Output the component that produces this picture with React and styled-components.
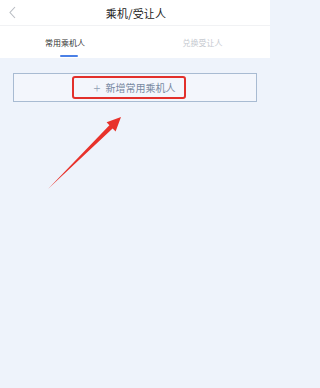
import React, { useState } from 'react';
import styled, { createGlobalStyle } from 'styled-components';

const GlobalStyle = createGlobalStyle`
  html, body {
    margin: 0;
    padding: 0;
    background: #eef3fb;
    font-family: "Noto Sans CJK SC", "Noto Sans", sans-serif;
  }
`;

const Page = styled.div`
  position: relative;
  width: 270px;
  min-height: 388px;
  background: #eef3fb;
`;

const Header = styled.div`
  display: grid;
  grid-template-columns: 30px 1fr 30px;
  align-items: center;
  height: 25px;
  background: #fff;
  border-bottom: 1px solid #f1f2f4;
`;

const BackButton = styled.button`
  display: flex;
  align-items: center;
  justify-content: flex-start;
  padding: 0 0 0 9px;
  border: none;
  background: none;
  height: 100%;
`;

const Title = styled.div`
  text-align: center;
  font-size: 11px;
  color: #222;
  letter-spacing: 0.2px;
  padding-left: 2px;
`;

const TabBar = styled.div`
  display: grid;
  grid-template-columns: 1fr 1fr;
  height: 32px;
  background: #fff;
`;

const Tab = styled.div`
  display: flex;
  flex-direction: column;
  align-items: center;
  padding-top: 11px;
  font-size: 8px;
  color: ${p => (p.active ? '#333' : '#c6cad0')};
  padding-right: ${p => (p.active ? '5px' : '0')};
`;

const Indicator = styled.div`
  width: 18px;
  height: 2px;
  margin-top: 7px;
  margin-left: 7px;
  border-radius: 1px;
  background: ${p => (p.active ? '#4a80e6' : 'transparent')};
`;

const Content = styled.div`
  padding: 15px 13px;
`;

const AddBox = styled.div`
  display: flex;
  align-items: center;
  justify-content: center;
  height: 27px;
  border: 1px solid #a8bbd2;
  background: #f3f6fc;
  padding-right: 12px;
`;

const Highlight = styled.div`
  display: flex;
  align-items: center;
  gap: 5px;
  height: 19px;
  padding: 0 9px 0 20px;
  border: 2px solid #e2302b;
  border-radius: 3px;
  font-size: 10px;
  color: #7889a1;
`;

const Plus = styled.span`
  font-size: 13px;
  font-weight: 300;
  color: #909fb4;
  line-height: 1;
`;

const Annotation = styled.svg`
  position: absolute;
  left: 0;
  top: 0;
  pointer-events: none;
`;

export default function App() {
  const [tab, setTab] = useState(0);
  const tabs = ['常用乘机人', '兑换受让人'];

  return (
    <Page>
      <GlobalStyle />
      <Header>
        <BackButton>
          <svg width="7" height="13" viewBox="0 0 7 13">
            <path d="M6 1 L1 6.5 L6 12" fill="none" stroke="#b8bcc2" strokeWidth="1.1" />
          </svg>
        </BackButton>
        <Title>乘机/受让人</Title>
        <div />
      </Header>
      <TabBar>
        {tabs.map((t, i) => (
          <Tab key={t} active={tab === i} onClick={() => setTab(i)}>
            {t}
            <Indicator active={tab === i} />
          </Tab>
        ))}
      </TabBar>
      <Content>
        <AddBox>
          <Highlight>
            <Plus>+</Plus>
            新增常用乘机人
          </Highlight>
        </AddBox>
      </Content>
      <Annotation width="270" height="388" viewBox="0 0 270 388">
        <polygon
          points="48,189 112.6,128.4 115.6,131.4 121,117 106.6,122.2 109.4,125.2"
          fill="#e8322b"
        />
      </Annotation>
    </Page>
  );
}
